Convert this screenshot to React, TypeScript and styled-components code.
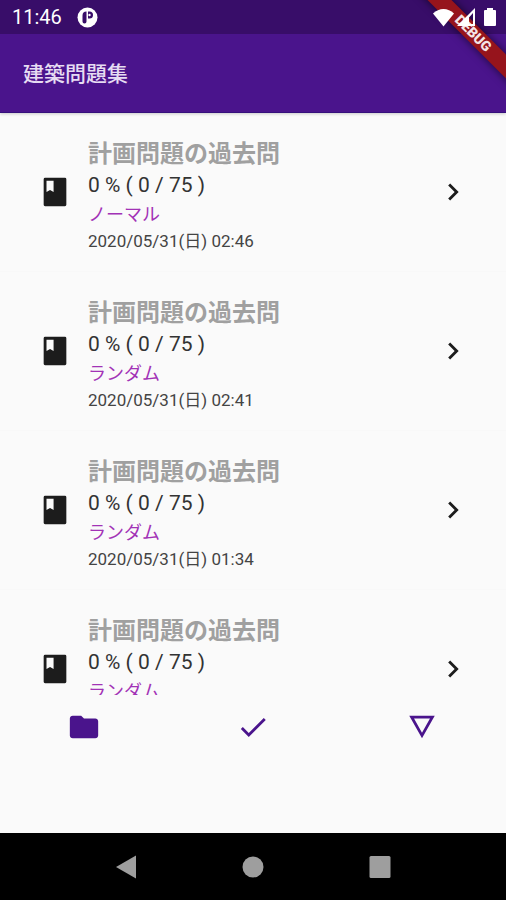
import React from "react";
import styled, { createGlobalStyle } from "styled-components";

const GlobalStyle = createGlobalStyle`
  *, *::before, *::after { box-sizing: border-box; }
  body { margin: 0; background: #fafafa; }
  body, button { font-family: Roboto, "Noto Sans CJK JP", sans-serif; }
`;

const Screen = styled.div`
  position: relative;
  display: flex;
  flex-direction: column;
  height: 100vh;
  overflow: hidden;
  background: #fafafa;
`;

const StatusBar = styled.div`
  position: relative;
  z-index: 3;
  flex: none;
  display: flex;
  align-items: center;
  justify-content: space-between;
  height: 34px;
  padding: 0 6px 0 12px;
  color: #fff;
`;

const StatusGroup = styled.div<{ $gap: number }>`
  display: flex;
  align-items: center;
  gap: ${(p) => p.$gap}px;
`;

const Clock = styled.span`
  font-size: 20px;
  line-height: 36px;
`;

const TopArea = styled.header`
  position: relative;
  z-index: 1;
  flex: none;
  background: linear-gradient(#380d69 34px, #4a148c 34px);
  border-bottom: 1px solid #35107c;
  box-shadow: 0 1px 3px rgba(0, 0, 0, 0.2);
`;

const AppBar = styled.div`
  display: flex;
  align-items: center;
  height: 78px;
  padding: 2px 23px 0;
`;

const AppTitle = styled.h1`
  margin: 0;
  font-size: 21px;
  line-height: 32px;
  font-weight: 500;
  color: #e6dcf2;
`;

const RibbonCorner = styled.div`
  position: absolute;
  z-index: 2;
  top: 0;
  right: 0;
  width: 96px;
  height: 96px;
  overflow: hidden;
  pointer-events: none;
`;

const Ribbon = styled.div`
  position: absolute;
  top: 25px;
  left: -7px;
  width: 140px;
  height: 17px;
  transform: rotate(45deg);
  background: #96141c;
  box-shadow: 0 0 8px rgba(0, 0, 0, 0.6);
  color: #f4e4e6;
  font-size: 14px;
  line-height: 17px;
  font-weight: 900;
  text-align: center;
`;

const List = styled.ul`
  flex: 1;
  min-height: 0;
  margin: 0;
  padding: 0;
  overflow: hidden;
  list-style: none;
`;

const Item = styled.li`
  border-bottom: 1px solid #f8f8f8;
`;

const ItemButton = styled.button`
  display: flex;
  align-items: center;
  gap: 16px;
  width: 100%;
  padding: 15px 36px 15px 38px;
  border: 0;
  background: none;
  text-align: left;
  color: #1c1c1c;
  cursor: pointer;
`;

const ItemText = styled.span`
  flex: 1;
  min-width: 0;
  display: flex;
  flex-direction: column;
  padding: 10px 0 4px;
`;

const ItemTitle = styled.span`
  font-size: 24px;
  line-height: 32px;
  font-weight: 700;
  color: #a0a0a0;
`;

const Score = styled.span`
  font-size: 21px;
  line-height: 30px;
  color: #333;
`;

const Mode = styled.span`
  font-size: 18px;
  line-height: 30px;
  color: #a232b6;
`;

const Stamp = styled.span`
  font-size: 17px;
  line-height: 22px;
  color: #444;
`;

const TabBar = styled.nav`
  flex: none;
  display: grid;
  grid-template-columns: repeat(3, 1fr);
  padding-bottom: 74px;
`;

const TabButton = styled.button`
  display: flex;
  align-items: center;
  justify-content: center;
  height: 64px;
  padding: 0;
  border: 0;
  background: none;
  color: #4a148c;
  cursor: pointer;
`;

const SystemNav = styled.nav`
  flex: none;
  display: grid;
  grid-template-columns: repeat(3, 1fr);
  padding: 0 12.5%;
  background: #000;
`;

const SystemButton = styled.button`
  display: flex;
  align-items: center;
  justify-content: center;
  height: 67px;
  padding: 0;
  border: 0;
  background: none;
  color: #9e9e9e;
  cursor: pointer;
`;

const Icon = styled.svg<{ $size: number }>`
  display: block;
  flex: none;
  width: ${(p) => p.$size}px;
  height: ${(p) => p.$size}px;
  fill: currentColor;
`;

const paths = {
  book: "M19 2H5a1 1 0 0 0-1 1v18a1 1 0 0 0 1 1h14a1 1 0 0 0 1-1V3a1 1 0 0 0-1-1zM6 4h5v8l-2.5-1.5L6 12V4z",
  chevron: "M10 6L8.59 7.41 13.17 12l-4.58 4.59L10 18l6-6z",
  folder: "M10 4H4c-1.1 0-1.99.9-1.99 2L2 18c0 1.1.9 2 2 2h16c1.1 0 2-.9 2-2V8c0-1.1-.9-2-2-2h-8l-2-2z",
  check: "M9 16.17L4.83 12l-1.42 1.41L9 19 21 7l-1.41-1.41z",
  triangle: "M3 4l9 16 9-16H3zm3.38 2h11.25L12 16 6.38 6z",
};

const MaterialIcon = ({ name }: { name: keyof typeof paths }) => (
  <Icon $size={34} viewBox="0 0 24 24" aria-hidden="true">
    <path d={paths[name]} />
  </Icon>
);

const records = [
  { mode: "ノーマル", stamp: "2020/05/31(日) 02:46" },
  { mode: "ランダム", stamp: "2020/05/31(日) 02:41" },
  { mode: "ランダム", stamp: "2020/05/31(日) 01:34" },
  { mode: "ランダム", stamp: "2020/05/31(日) 01:32" },
];

export default function App() {
  return (
    <>
      <GlobalStyle />
      <Screen>
        <TopArea>
          <StatusBar>
            <StatusGroup $gap={15}>
              <Clock>11:46</Clock>
              <Icon $size={21} viewBox="0 0 21 21" aria-hidden="true">
                <circle cx="10.5" cy="10.5" r="10" />
                <path d="M9.500 4.500v10a2 2 0 0 1-4 0v-6a4 4 0 0 1 4-4z" fill="#380d69" />
                <path d="M11 4.500h1.500a3.500 3.500 0 0 1 0 7H11z" fill="#380d69" />
                <circle cx="12.500" cy="8" r="1.200" />
              </Icon>
            </StatusGroup>
            <StatusGroup $gap={3}>
              <Icon $size={21} viewBox="0 0 21 21" aria-hidden="true">
                <path d="M0 6.500C6 .5 15 .5 21 6.500L10.500 19.500z" />
              </Icon>
              <Icon $size={20} viewBox="0 0 20 20" aria-hidden="true">
                <path d="M18 1v18H0zM16 6l-4 4.500V17h4z" fillRule="evenodd" />
              </Icon>
              <Icon $size={20} viewBox="0 0 20 20" aria-hidden="true">
                <path d="M7 1h6v2h2a1 1 0 0 1 1 1v14a1 1 0 0 1-1 1H5a1 1 0 0 1-1-1V4a1 1 0 0 1 1-1h2z" />
              </Icon>
            </StatusGroup>
          </StatusBar>
          <AppBar>
            <AppTitle>建築問題集</AppTitle>
          </AppBar>
          <RibbonCorner>
            <Ribbon>DEBUG</Ribbon>
          </RibbonCorner>
        </TopArea>
        <List>
          {records.map((r) => (
            <Item key={r.stamp}>
              <ItemButton type="button">
                <MaterialIcon name="book" />
                <ItemText>
                  <ItemTitle>計画問題の過去問</ItemTitle>
                  <Score>0 % ( 0 / 75 )</Score>
                  <Mode>{r.mode}</Mode>
                  <Stamp>{r.stamp}</Stamp>
                </ItemText>
                <MaterialIcon name="chevron" />
              </ItemButton>
            </Item>
          ))}
        </List>
        <TabBar>
          <TabButton type="button" aria-label="フォルダ">
            <MaterialIcon name="folder" />
          </TabButton>
          <TabButton type="button" aria-label="チェック">
            <MaterialIcon name="check" />
          </TabButton>
          <TabButton type="button" aria-label="詳細">
            <MaterialIcon name="triangle" />
          </TabButton>
        </TabBar>
        <SystemNav>
          <SystemButton type="button" aria-label="戻る">
            <Icon $size={24} viewBox="0 0 24 24" aria-hidden="true">
              <path d="M1 12L21 .5v23z" />
            </Icon>
          </SystemButton>
          <SystemButton type="button" aria-label="ホーム">
            <Icon $size={24} viewBox="0 0 24 24" aria-hidden="true">
              <circle cx="12" cy="12" r="10.500" />
            </Icon>
          </SystemButton>
          <SystemButton type="button" aria-label="履歴">
            <Icon $size={24} viewBox="0 0 24 24" aria-hidden="true">
              <rect x="1.500" y="1" width="21" height="22" rx="1.500" />
            </Icon>
          </SystemButton>
        </SystemNav>
      </Screen>
    </>
  );
}
